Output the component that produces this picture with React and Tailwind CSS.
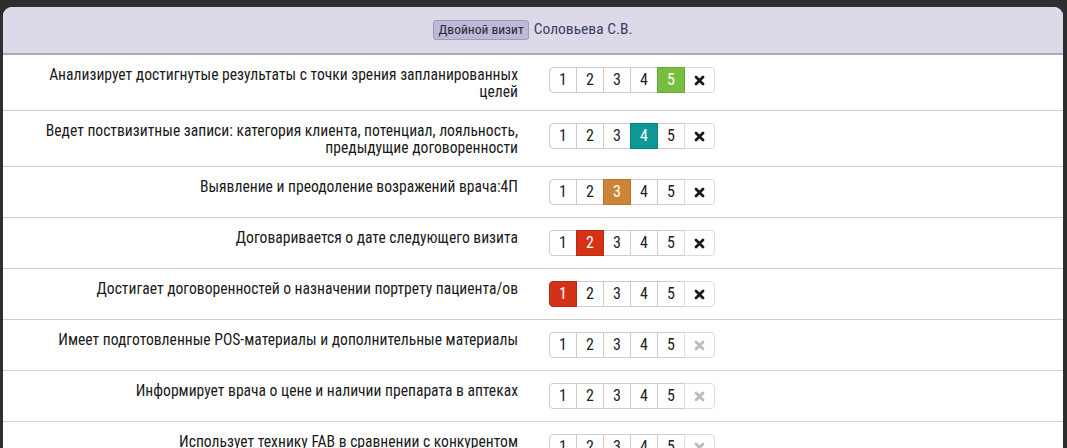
import { useState } from 'react'

const FONT = { fontFamily: '"Roboto Condensed", "Liberation Sans Narrow", "DejaVu Sans Condensed", Roboto, sans-serif' }

const ROWS = [
  { label: ['Анализирует достигнутые результаты с точки зрения запланированных', 'целей'], value: 5 },
  { label: ['Ведет поствизитные записи: категория клиента, потенциал, лояльность,', 'предыдущие договоренности'], value: 4 },
  { label: ['Выявление и преодоление возражений врача:4П'], value: 3 },
  { label: ['Договаривается о дате следующего визита'], value: 2 },
  { label: ['Достигает договоренностей о назначении портрету пациента/ов'], value: 1 },
  { label: ['Имеет подготовленные POS-материалы и дополнительные материалы'], value: null },
  { label: ['Информирует врача о цене и наличии препарата в аптеках'], value: null },
  { label: ['Использует технику FAB в сравнении с конкурентом'], value: null },
]

const ACTIVE = {
  1: 'bg-[#d33216] border-[#b82a12] text-white',
  2: 'bg-[#d33216] border-[#b82a12] text-white',
  3: 'bg-[#cd8436] border-[#b5722b] text-white',
  4: 'bg-[#0e9898] border-[#0a8080] text-white',
  5: 'bg-[#77bd40] border-[#66a834] text-white',
}

function Cross({ muted }) {
  return (
    <svg width="11" height="11" viewBox="0 0 11 11">
      <path d="M2 2 L9 9 M9 2 L2 9" stroke={muted ? '#bbbbbb' : '#1a1a1a'} strokeWidth="2.8" strokeLinecap="round" />
    </svg>
  )
}

function Rating({ initial }) {
  const [value, setValue] = useState(initial)
  return (
    <div className="flex mb-[3px] h-[26px]">
      {[1, 2, 3, 4, 5].map(n => (
        <button key={n} onClick={() => setValue(n)}
          className={`w-[28px] h-[26px] flex items-center justify-center text-[16px] border -ml-px first:ml-0 first:rounded-l ${
            value === n ? ACTIVE[n] + ' relative z-10' : 'bg-white border-[#cccccc] text-[#222]'
          }`}>
          {n}
        </button>
      ))}
      <button onClick={() => setValue(null)}
        className="w-[31px] h-[26px] flex items-center justify-center bg-white border border-[#dddddd] -ml-px rounded-r">
        <Cross muted={value == null} />
      </button>
    </div>
  )
}

export default function App() {
  return (
    <div className="min-h-[448px] bg-[#2e2e2e] pt-[7px] pl-[3px] pr-[4px] overflow-hidden" style={FONT}>
      <div className="bg-white rounded-t-[9px] overflow-hidden">
        {/* header */}
        <div className="h-[48px] bg-[#dcdae8] border-b-2 border-[#a9a8ba] flex items-center justify-center gap-[5px] pb-px">
          <span className="px-[4px] h-[20px] flex items-center bg-[#bdb9d6] border border-[#9e9abd] rounded-[3px] text-[13.5px] text-[#2a2a3a]">
            Двойной визит
          </span>
          <span className="text-[15.5px] text-[#3b3b68]">Соловьева С.В.</span>
        </div>

        {ROWS.map((r, i) => (
          <div key={i} className="flex border-b border-[#cfcfcf] pt-3 pb-[9px]">
            <div className="w-[530px] pr-[15px] text-right text-[15.6px] leading-[17px] text-[#1a1a1a]">
              {r.label.map((l, j) => <div key={j}>{l}</div>)}
            </div>
            <div className="pl-[16px]">
              <Rating initial={r.value} />
            </div>
          </div>
        ))}
      </div>
    </div>
  )
}
